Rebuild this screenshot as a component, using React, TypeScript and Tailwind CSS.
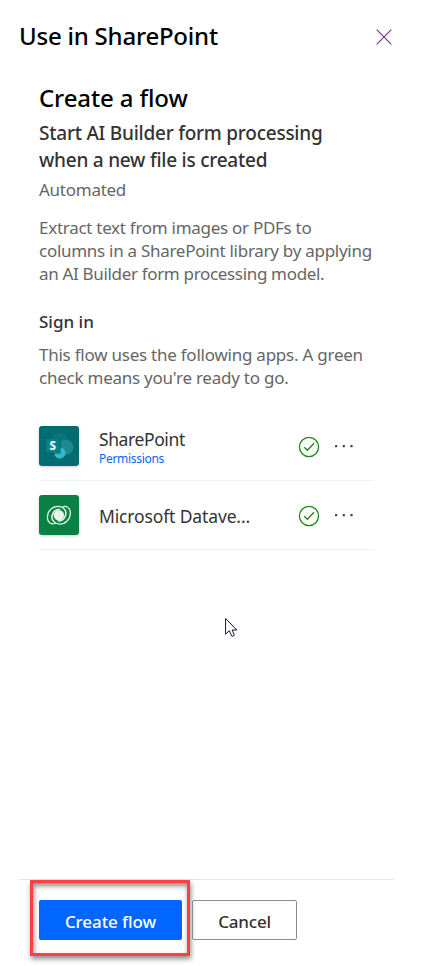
import React from "react";

function CloseIcon() {
  return (
    <svg width="16" height="16" viewBox="0 0 16 16" fill="none" stroke="#7b2a8c" strokeWidth="1.1">
      <path d="M.7.7l14.6 14.6M15.3.7L.7 15.3" />
    </svg>
  );
}

function CheckIcon() {
  return (
    <svg width="22" height="22" viewBox="0 0 22 22" fill="none" stroke="#1b861b" strokeWidth="1.3">
      <circle cx="11" cy="11" r="9.6" />
      <path d="M6.2 11.3l3.2 3 6.6-7" />
    </svg>
  );
}

function MoreIcon() {
  return (
    <svg width="20" height="4" viewBox="0 0 20 4" fill="#444">
      <rect x="1" y="1" width="2.200" height="2.200" rx=".5" />
      <rect x="8.700" y="1" width="2.200" height="2.200" rx=".5" />
      <rect x="16.400" y="1" width="2.200" height="2.200" rx=".5" />
    </svg>
  );
}

function SharePointLogo() {
  return (
    <svg width="40" height="40" viewBox="0 0 40 40">
      <rect width="40" height="40" fill="#036c70" />
      <circle cx="20.500" cy="15" r="8.300" fill="#07797d" />
      <circle cx="27" cy="21.200" r="7.500" fill="#1c8a92" />
      <circle cx="20.800" cy="27" r="5.600" fill="#35bcc8" />
      <path d="M8 12.500h12.500q1.500 0 1.500 1.500v12q0 2-2 2H8z" fill="#025c60" opacity=".6" />
      <rect x="7" y="13" width="13.500" height="13.500" rx="1" fill="#038387" />
      <text x="13.700" y="23.900" textAnchor="middle" fontSize="11.500" fontWeight="800" fill="#e9f7f7" fontFamily="'Noto Sans', sans-serif">S</text>
    </svg>
  );
}

function DataverseLogo() {
  return (
    <svg width="40" height="40" viewBox="0 0 40 40" fill="none">
      <rect width="40" height="40" fill="#088142" />
      <g stroke="#e8f5ec" strokeWidth="1.200" strokeLinecap="round" strokeLinejoin="round">
        <path d="M14.200 25.800C12.800 24.200 12.700 21 13.800 18.600C15 15.800 17.500 14.300 20.500 14.500" strokeWidth="1.500" />
        <path d="M25.600 14.600C27 16.200 27.100 19.400 26 21.800C24.800 24.600 22.300 26.100 19.300 25.900" strokeWidth="1.500" />
        <path d="M16.500 28.200C12.500 30.300 8.400 27.600 8.400 22.300C8.400 16 13.500 11.300 19 11.300C21.900 11.300 24.300 12.500 25.600 14.600" />
        <path d="M23.300 12.200C27.300 10.100 31.400 12.800 31.400 18.100C31.400 24.400 26.300 29.100 20.800 29.100C17.900 29.100 15.500 27.900 14.200 25.800" />
      </g>
      <circle cx="19.900" cy="20.200" r="5.200" fill="#e8f5ec" />
    </svg>
  );
}

function ConnectionRow({ logo, children }: { logo: React.ReactNode; children: React.ReactNode }) {
  return (
    <li className="flex h-[69px] items-start border-b border-[#f1f1f1] pt-[14px]">
      <div className="size-10 shrink-0 overflow-hidden rounded-[3px] shadow-[0_1px_3px_rgba(0,0,0,0.2)]">{logo}</div>
      <div className="ml-5 w-[199px] shrink-0">{children}</div>
      <div className="mt-[10px]"><CheckIcon /></div>
      <div className="mt-[18px] ml-[14px]"><MoreIcon /></div>
    </li>
  );
}

export default function App() {
  return (
    <main className="flex h-[966px] w-[423px] flex-col overflow-hidden bg-white font-['Noto_Sans',sans-serif] whitespace-nowrap text-[#333]">
      <header className="flex h-[72px] shrink-0 items-center justify-between pr-[31px] pl-[19px]">
        <h1 className="text-[24px] leading-8 font-medium tracking-[-0.22px] text-black">Use in SharePoint</h1>
        <button aria-label="Close" className="mt-[2px]"><CloseIcon /></button>
      </header>

      <section className="flex flex-1 flex-col pt-[10px] pr-[49px] pl-[39px]">
        <h2 className="text-[24px] leading-8 font-medium tracking-[-0.12px] text-black">Create a flow</h2>
        <h3 className="mt-[6px] text-[19px] leading-[27px] font-medium tracking-[-0.24px]">
          <span className="block">Start AI Builder form processing</span>
          <span className="block">when a new file is created</span>
        </h3>
        <p className="mt-1 text-[17px] leading-[23px] tracking-[-0.26px] text-[#666]">Automated</p>
        <p className="mt-[15px] text-[17px] leading-[23px] tracking-[-0.28px] text-[#666]">
          <span className="block">Extract text from images or PDFs to</span>
          <span className="block">columns in a SharePoint library by applying</span>
          <span className="block tracking-[-0.33px]">an AI Builder form processing model.</span>
        </p>
        <h4 className="mt-[25px] text-[17px] leading-[23px] font-medium">Sign in</h4>
        <p className="mt-[10px] text-[17px] leading-[23px] tracking-[-0.24px] text-[#666]">
          <span className="block">This flow uses the following apps. A green</span>
          <span className="block">check means you're ready to go.</span>
        </p>
        <ul className="mt-[23px] w-[335px]">
          <ConnectionRow logo={<SharePointLogo />}>
            <div className="mt-px text-[17.500px] leading-6 tracking-[-0.4px]">SharePoint</div>
            <a className="mt-px block text-[12px] leading-[14px] tracking-[-0.3px] text-[#0066ff]">Permissions</a>
          </ConnectionRow>
          <ConnectionRow logo={<DataverseLogo />}>
            <div className="mt-[9px] text-[17.500px] leading-6 tracking-[-0.14px]">Microsoft Datave...</div>
          </ConnectionRow>
        </ul>
        <svg className="mt-[67px] ml-[186px]" width="14" height="21" viewBox="0 0 14 21">
          <path d="M.6 1.500v15.700l3.700-3.500 2.500 5.400q1.700.8 2.500-1.100l-2.200-5h4.700z" fill="#fff" stroke="#111827" strokeWidth="1" />
        </svg>
      </section>

      <footer className="mx-[19px] h-[87px] w-[375px] shrink-0 border-t border-[#e6e6e6] pl-[11px]">
        <div className="flex">
          <div className="h-[76px] w-[160px] shrink-0 border-[3px] border-[#ff4040] pt-[17px] pl-[6px] shadow-[1px_3px_5px_rgba(0,0,0,0.45),inset_1px_3px_5px_rgba(0,0,0,0.45)]">
            <button className="flex h-10 w-[143px] items-center justify-center rounded-[2px] bg-[#0066ff] pt-[3px] text-[17px] font-medium tracking-[-0.1px] text-white">Create flow</button>
          </div>
          <button className="mt-5 ml-[2px] flex h-10 w-[105px] items-center justify-center rounded-[2px] border border-[#8a8a8a] pt-[3px] text-[17px] font-medium tracking-[-0.2px]">Cancel</button>
        </div>
      </footer>
    </main>
  );
}
